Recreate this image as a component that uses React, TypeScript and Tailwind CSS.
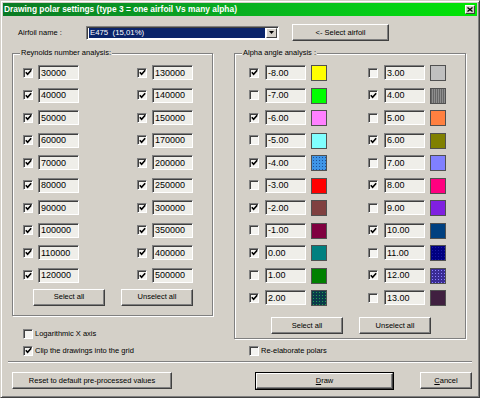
import type { ReactNode } from "react";

const Check = ({ on }: { on?: boolean }) => (
  <span className="w-[10px] h-[10px] shrink-0 border border-t-[#808080] border-l-[#808080] border-b-white border-r-white bg-[#f4f3f0] shadow-[inset_1px_1px_0_#404040] flex items-center justify-center">
    {on && (
      <svg width="7" height="7" viewBox="0 0 7 7">
        <path d="M0.8 3.2 L2.6 5.2 L6.2 1.2" stroke="#000" strokeWidth="1.6" fill="none" />
      </svg>
    )}
  </span>
);

const Field = ({ v }: { v: string }) => (
  <span className="w-[41px] h-[15px] shrink-0 border border-t-[#808080] border-l-[#808080] border-b-white border-r-white shadow-[inset_1px_1px_0_#404040] bg-[#efeee9] pl-[2px] pt-[1px] flex items-center text-[9px]">
    {v}
  </span>
);

const Btn = ({ children, className = "" }: { children: ReactNode; className?: string }) => (
  <button
    className={
      "h-[17px] shrink-0 border border-t-white border-l-white border-b-[#404040] border-r-[#404040] shadow-[inset_-1px_-1px_0_#808080] bg-[#d4d0c8] flex items-center justify-center " +
      className
    }
  >
    {children}
  </button>
);

const Group = ({ title, className, children }: { title: string; className: string; children: ReactNode }) => (
  <div className={"relative shrink-0 border border-[#808080] shadow-[inset_1px_1px_0_#fff,1px_1px_0_#fff] " + className}>
    <span className="absolute -top-[6px] left-[7px] bg-[#d4d0c8] px-[1px] leading-[10px]">{title}</span>
    {children}
  </div>
);

const reCol1 = ["30000", "40000", "50000", "60000", "70000", "80000", "90000", "100000", "110000", "120000"];
const reCol2 = ["130000", "140000", "150000", "170000", "200000", "250000", "300000", "350000", "400000", "500000"];

const alphaCol1 = [
  { v: "-8.00", on: true, sw: "bg-[#ffff00]" },
  { v: "-7.00", on: false, sw: "bg-[#00ff00]" },
  { v: "-6.00", on: true, sw: "bg-[#ff80ff]" },
  { v: "-5.00", on: false, sw: "bg-[#80ffff]" },
  { v: "-4.00", on: true, sw: "bg-[#3f95e6] bg-[image:radial-gradient(circle,#1c4f9a_0.6px,transparent_0.9px)] bg-[length:3px_3px]" },
  { v: "-3.00", on: false, sw: "bg-[#ff0000]" },
  { v: "-2.00", on: true, sw: "bg-[#804040]" },
  { v: "-1.00", on: false, sw: "bg-[#800040]" },
  { v: "0.00", on: true, sw: "bg-[#008080]" },
  { v: "1.00", on: false, sw: "bg-[#008000]" },
  { v: "2.00", on: true, sw: "bg-[#0a3a4a] bg-[image:radial-gradient(circle,#20a050_0.6px,transparent_0.9px)] bg-[length:3px_3px]" },
];

const alphaCol2 = [
  { v: "3.00", on: false, sw: "bg-[#c0c0c0]" },
  { v: "4.00", on: true, sw: "bg-[#7c7c7c] bg-[image:repeating-linear-gradient(90deg,#666_0_1px,#8e8e8e_1px_2px)]" },
  { v: "5.00", on: false, sw: "bg-[#ff8040]" },
  { v: "6.00", on: true, sw: "bg-[#808000]" },
  { v: "7.00", on: false, sw: "bg-[#8080ff]" },
  { v: "8.00", on: true, sw: "bg-[#ff0080]" },
  { v: "9.00", on: false, sw: "bg-[#8020e0]" },
  { v: "10.00", on: true, sw: "bg-[#004080]" },
  { v: "11.00", on: false, sw: "bg-[#000080] bg-[image:radial-gradient(circle,#1a1aa8_0.6px,transparent_0.9px)] bg-[length:3px_3px]" },
  { v: "12.00", on: true, sw: "bg-[#3a2c94] bg-[image:radial-gradient(circle,#8a80ff_0.6px,transparent_0.9px)] bg-[length:3px_3px]" },
  { v: "13.00", on: false, sw: "bg-[#402040]" },
];

export default function App() {
  return (
    <div className="w-[480px] h-[398px] overflow-hidden bg-[#d4d0c8] border border-t-[#d4d0c8] border-l-[#d4d0c8] border-b-[#404040] border-r-[#404040] shadow-[inset_1px_1px_0_#fff,inset_-1px_-1px_0_#808080] p-[2px] flex flex-col font-['Liberation_Sans',Arial,sans-serif] text-[7.5px] text-black leading-none">
      {/* title bar */}
      <div className="h-[13px] shrink-0 bg-gradient-to-r from-[#0a7a24] to-[#00e600] flex items-center justify-between pl-[1px] pr-[2px]">
        <span className="text-white font-bold text-[8.4px]">Drawing polar settings (type 3 = one airfoil Vs many alpha)</span>
        <span className="w-[10px] h-[9px] border border-t-white border-l-white border-b-[#404040] border-r-[#404040] bg-[#d4d0c8] flex items-center justify-center">
          <svg width="6" height="5" viewBox="0 0 6 5">
            <path d="M0.5 0.5 L5.5 4.5 M5.5 0.5 L0.5 4.5" stroke="#000" strokeWidth="1.3" />
          </svg>
        </span>
      </div>

      {/* airfoil row */}
      <div className="mt-[8px] h-[17px] flex items-center">
        <span className="ml-[15px] w-[68px]">Airfoil name :</span>
        <div className="w-[193px] h-[14px] border border-t-[#808080] border-l-[#808080] border-b-white border-r-white shadow-[inset_1px_1px_0_#404040] bg-white flex items-center p-[1px]">
          <span className="flex-1 h-[10px] ml-[1px] bg-[#0a246a] text-white text-[7.8px] pl-[1px] flex items-center">E475&nbsp;&nbsp;(15,01%)</span>
          <span className="w-[11px] h-[10px] ml-[1px] border border-t-white border-l-white border-b-[#404040] border-r-[#404040] bg-[#d4d0c8] flex items-center justify-center">
            <svg width="5" height="3" viewBox="0 0 5 3">
              <path d="M0 0 H5 L2.5 3 Z" fill="#000" />
            </svg>
          </span>
        </div>
        <Btn className="ml-[13px] w-[97px]">&lt;- Select airfoil</Btn>
      </div>

      {/* groups */}
      <div className="mt-[12px] flex items-start">
        <div className="ml-[9px] w-[201px] flex flex-col">
          <Group title="Reynolds number analysis:" className="h-[263px] pt-[11px] pl-[10px]">
            <div className="flex gap-[58px]">
              {[reCol1, reCol2].map((col, ci) => (
                <div key={ci} className="flex flex-col gap-[7.5px]">
                  {col.map((v) => (
                    <div key={v} className="h-[15px] flex items-center gap-[5px]">
                      <Check on />
                      <Field v={v} />
                    </div>
                  ))}
                </div>
              ))}
            </div>
            <div className="mt-[6px] ml-[10px] flex gap-[16px]">
              <Btn className="w-[72px]">Select all</Btn>
              <Btn className="w-[72px]">Unselect all</Btn>
            </div>
          </Group>
          <div className="mt-[11px] ml-[11px] flex flex-col gap-[4px]">
            <div className="h-[13px] flex items-center gap-[2px]">
              <Check />
              <span>Logarithmic X axis</span>
            </div>
            <div className="h-[13px] flex items-center gap-[2px]">
              <Check on />
              <span>Clip the drawings into the grid</span>
            </div>
          </div>
        </div>

        <div className="ml-[21px] w-[232px] flex flex-col">
          <Group title="Alpha angle analysis  :" className="h-[286px] pt-[11px] pl-[14px]">
            <div className="flex gap-[41px]">
              {[alphaCol1, alphaCol2].map((col, ci) => (
                <div key={ci} className="flex flex-col gap-[7.5px]">
                  {col.map((a) => (
                    <div key={a.v} className="h-[15px] flex items-start">
                      <span className="mt-[2.5px]">
                        <Check on={a.on} />
                      </span>
                      <span className="ml-[6px]">
                        <Field v={a.v} />
                      </span>
                      <span className={"ml-[5px] w-[16px] h-[16px] border border-[#505050] " + a.sw} />
                    </div>
                  ))}
                </div>
              ))}
            </div>
            <div className="mt-[12px] ml-[22px] flex gap-[16px]">
              <Btn className="w-[72px]">Select all</Btn>
              <Btn className="w-[72px]">Unselect all</Btn>
            </div>
          </Group>
          <div className="mt-[5px] ml-[15px] h-[13px] flex items-center gap-[2px]">
            <Check />
            <span>Re-elaborate polars</span>
          </div>
        </div>
      </div>

      {/* separator */}
      <div className="mt-[4px] mx-[5px] h-[2px] border-t border-t-[#808080] border-b border-b-white" />

      {/* bottom buttons */}
      <div className="mt-[9px] ml-[9px] flex">
        <Btn className="w-[160px]">Reset to default pre-processed values</Btn>
        <div className="ml-[83px] w-[139px] h-[18px] border border-black flex">
          <Btn className="w-full h-full">
            <span>
              <span className="underline">D</span>raw
            </span>
          </Btn>
        </div>
        <Btn className="ml-[26px] w-[52px]">
          <span>
            <span className="underline">C</span>ancel
          </span>
        </Btn>
      </div>
    </div>
  );
}
